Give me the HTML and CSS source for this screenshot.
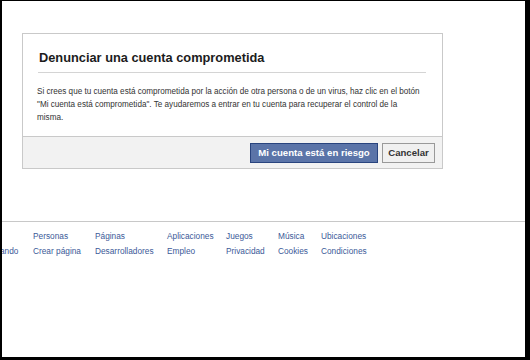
FILE: index.html
```html
<!DOCTYPE html>
<html lang="es">
<head>
<meta charset="utf-8">
<link rel="stylesheet" href="styles.css">
</head>
<body>
<div class="frame">
  <div class="dialog">
    <div class="dialog-body">
      <h2 class="title">Denunciar una cuenta comprometida</h2>
      <p class="text">Si crees que tu cuenta está comprometida por la acción de otra persona o de un virus, haz clic en el botón "Mi cuenta está comprometida". Te ayudaremos a entrar en tu cuenta para recuperar el control de la misma.</p>
    </div>
    <div class="dialog-footer">
      <button class="btn btn-primary">Mi cuenta está en riesgo</button>
      <button class="btn btn-cancel">Cancelar</button>
    </div>
  </div>
  <div class="footer">
    <nav class="links">
      <a class="cut"></a>
      <a>Personas</a>
      <a>Páginas</a>
      <a>Aplicaciones</a>
      <a>Juegos</a>
      <a>Música</a>
      <a>Ubicaciones</a>
      <a class="cut">ando</a>
      <a>Crear página</a>
      <a>Desarrolladores</a>
      <a>Empleo</a>
      <a>Privacidad</a>
      <a>Cookies</a>
      <a>Condiciones</a>
    </nav>
  </div>
</div>
</body>
</html>
```
FILE: styles.css
```css
* { box-sizing: border-box; }
html, body { margin: 0; padding: 0; background: #fff; }
body {
  font-family: "Liberation Sans", Arial, sans-serif;
  font-size: 11px;
  color: #333;
}
.frame {
  width: 530px;
  height: 360px;
  border-style: solid;
  border-color: #000;
  border-width: 1px 5px 3px 2px;
  background: #fff;
  overflow: hidden;
  padding-top: 32px;
}
.dialog {
  margin-left: 20px;
  width: 421px;
  border: 1px solid #c9c9c9;
  background: #fff;
}
.dialog-body {
  padding: 15px 16px 12px 15px;
}
.title {
  margin: 0;
  padding: 0 0 6px 1px;
  font-size: 12.8px;
  font-weight: bold;
  color: #1c1c1c;
  border-bottom: 1px solid #d4d4d4;
  line-height: 17px;
}
.text {
  margin: 12px 3px 0 -1px;
  font-size: 8.15px;
  line-height: 13px;
  color: #333;
}
.dialog-footer {
  border-top: 1px solid #c9c9c9;
  background: #f2f2f2;
  height: 32px;
  display: flex;
  justify-content: flex-end;
  align-items: center;
  gap: 4px;
  padding-right: 7px;
}
.btn {
  font-family: "Liberation Sans", Arial, sans-serif;
  font-size: 9.6px;
  font-weight: bold;
  height: 20px;
  padding: 0;
  line-height: 18px;
  cursor: pointer;
  white-space: nowrap;
}
.btn-primary {
  width: 128px;
  background: #5b74a8;
  border: 1px solid #29447e;
  color: #fff;
}
.btn-cancel {
  width: 53px;
  background: #f0f0f0;
  border: 1px solid #999;
  color: #333;
}
.footer {
  margin-top: 52px;
  border-top: 1px solid #c8c8c8;
  padding-top: 8px;
}
.links {
  display: grid;
  grid-template-columns: 31px 62px 72px 59px 52px 43px auto;
  row-gap: 2px;
  font-size: 8.3px;
  line-height: 13px;
}
.links a {
  color: #3b5998;
  text-decoration: none;
  white-space: nowrap;
}
.links a.cut { margin-left: -2px; }
```
